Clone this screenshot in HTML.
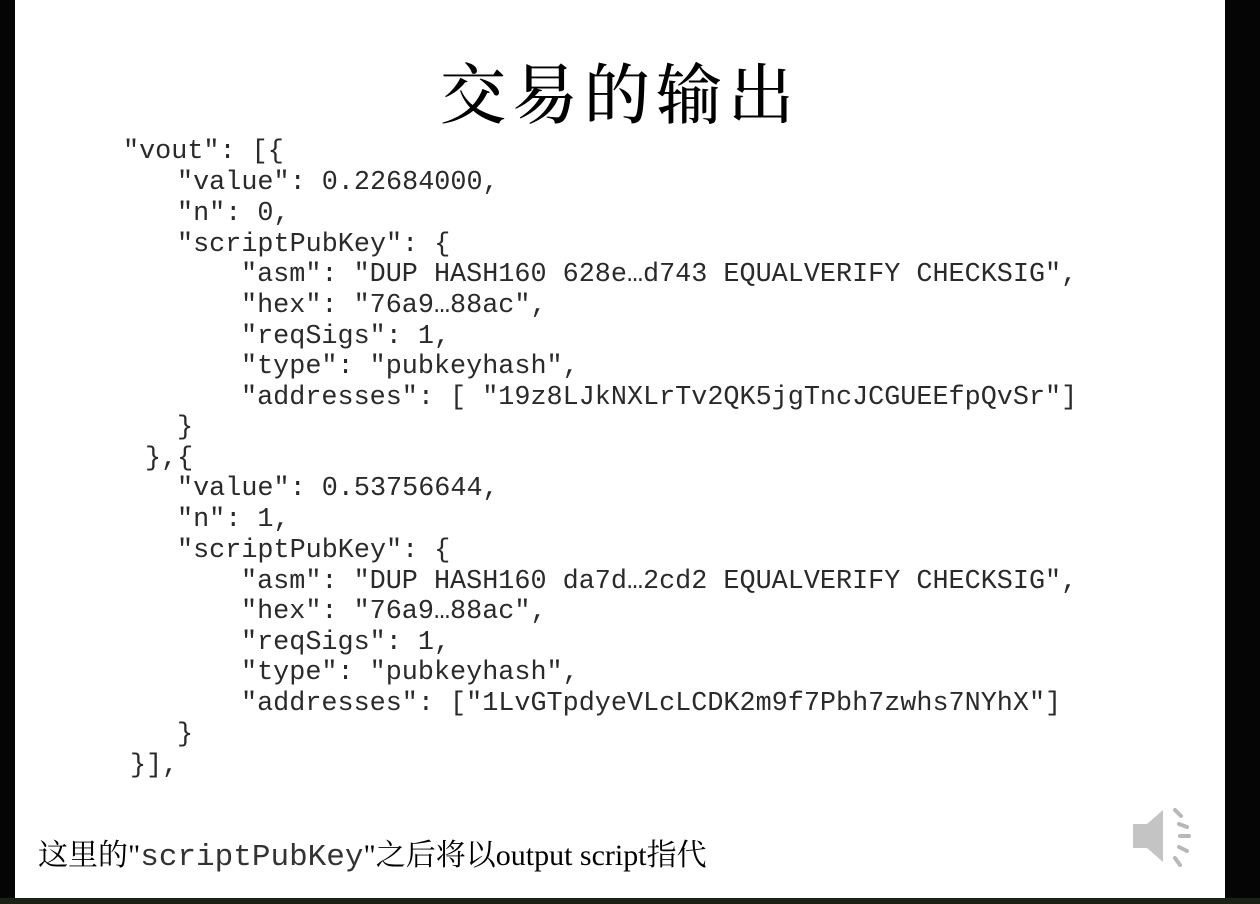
<!DOCTYPE html>
<html><head><meta charset="utf-8"><style>
html,body{margin:0;padding:0;}
body{width:1260px;height:904px;background:#050505;position:relative;overflow:hidden;}
.slide{position:absolute;left:15px;top:0;width:1210px;height:898px;background:#fff;}
.bot{position:absolute;left:0;top:898px;width:1260px;height:6px;background:#1a2214;}
.title{position:absolute;left:0;width:1240px;top:45px;text-align:center;font-family:"Noto Serif CJK SC","WenQuanYi Zen Hei",serif;font-size:66px;font-weight:500;letter-spacing:6px;color:#000;line-height:90px;}
.l{position:absolute;font-family:"Liberation Mono",monospace;font-size:26.8px;line-height:30px;color:#2a2a2a;white-space:pre;}
.cap{position:absolute;left:38px;top:836px;font-size:30px;line-height:40px;color:#000;white-space:pre;font-family:"Liberation Serif","Noto Serif CJK SC",serif;}
.cap .m{font-family:"Liberation Mono",monospace;font-size:31px;color:#333;}
</style></head><body>
<div class="slide"></div>
<div class="bot"></div>
<div class="title">交易的输出</div>
<div class="l" style="left:123px;top:137px">"vout": [{</div>
<div class="l" style="left:177px;top:168px">"value": 0.22684000,</div>
<div class="l" style="left:177px;top:199px">"n": 0,</div>
<div class="l" style="left:177px;top:230px">"scriptPubKey": {</div>
<div class="l" style="left:241px;top:260px">"asm": "DUP HASH160 628e…d743 EQUALVERIFY CHECKSIG",</div>
<div class="l" style="left:241px;top:291px">"hex": "76a9…88ac",</div>
<div class="l" style="left:241px;top:322px">"reqSigs": 1,</div>
<div class="l" style="left:241px;top:352px">"type": "pubkeyhash",</div>
<div class="l" style="left:241px;top:383px">"addresses": [ "19z8LJkNXLrTv2QK5jgTncJCGUEEfpQvSr"]</div>
<div class="l" style="left:177px;top:413px">}</div>
<div class="l" style="left:145px;top:444px">},{</div>
<div class="l" style="left:177px;top:474px">"value": 0.53756644,</div>
<div class="l" style="left:177px;top:505px">"n": 1,</div>
<div class="l" style="left:177px;top:536px">"scriptPubKey": {</div>
<div class="l" style="left:241px;top:567px">"asm": "DUP HASH160 da7d…2cd2 EQUALVERIFY CHECKSIG",</div>
<div class="l" style="left:241px;top:597px">"hex": "76a9…88ac",</div>
<div class="l" style="left:241px;top:628px">"reqSigs": 1,</div>
<div class="l" style="left:241px;top:658px">"type": "pubkeyhash",</div>
<div class="l" style="left:241px;top:689px">"addresses": ["1LvGTpdyeVLcLCDK2m9f7Pbh7zwhs7NYhX"]</div>
<div class="l" style="left:177px;top:720px">}</div>
<div class="l" style="left:130px;top:751px">}],</div>
<div class="cap">这里的"<span class="m">scriptPubKey</span>"之后将以output script指代</div>
<svg style="position:absolute;left:1125px;top:800px" width="80" height="75" viewBox="0 0 80 75">
<path d="M8 24 H22 L38 10 V62 L22 48 H8 Z" fill="#c4c4c4"/>
<g stroke="#b8b8b8" stroke-width="4" stroke-linecap="round">
<line x1="50" y1="10" x2="56" y2="16"/>
<line x1="54" y1="24" x2="62" y2="27"/>
<line x1="55" y1="36" x2="64" y2="36"/>
<line x1="54" y1="47" x2="62" y2="51"/>
<line x1="50" y1="58" x2="55" y2="65"/>
</g></svg>
</body></html>
